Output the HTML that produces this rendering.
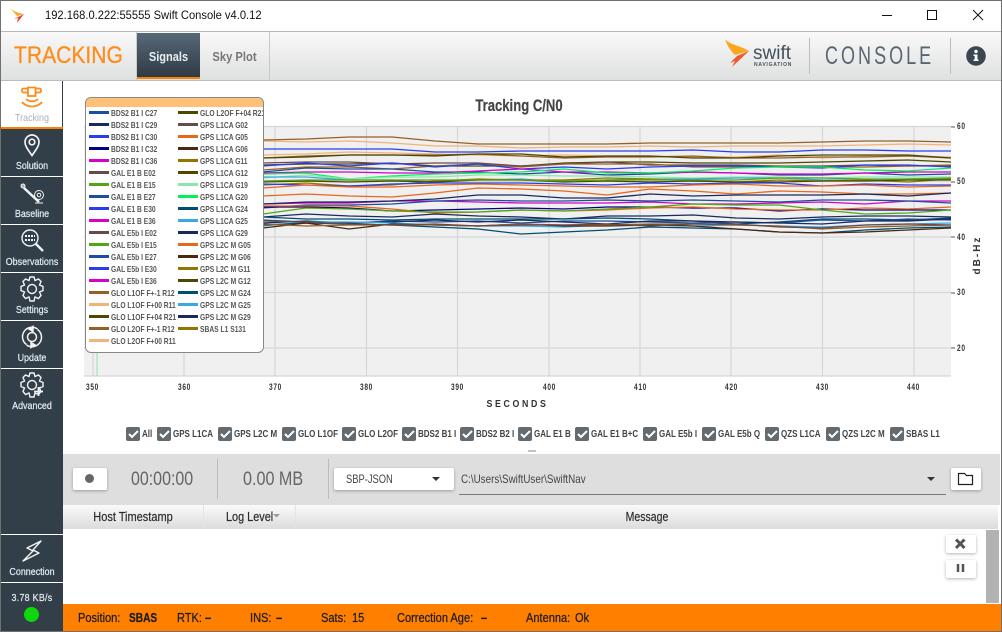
<!DOCTYPE html>
<html><head><meta charset="utf-8"><style>
html,body{margin:0;padding:0;background:#fff}
#r{position:relative;width:1002px;height:632px;overflow:hidden;background:#fff;font-family:"Liberation Sans",sans-serif}
#r div{position:absolute;white-space:nowrap}
.side{left:1px;width:62px;background:#323e48}
.sl{left:1px;width:62px;text-align:center;font-size:10.5px;color:#e6eef5;line-height:12px;transform:scaleX(.85);-webkit-text-stroke:.2px #e6eef5}
.cl{top:428px;font-size:10px;font-weight:bold;color:#444;line-height:13px;transform:scaleX(.8);transform-origin:0 50%}
.lg{font-size:8.5px;font-weight:bold;color:#555;line-height:10px;transform:scaleX(.79);transform-origin:0 50%}
.ls{width:20px;height:3px}
.st{top:610px;font-size:13px;color:#1c1c1c;line-height:15px;transform:scaleX(.85);transform-origin:0 50%;-webkit-text-stroke:.25px #1c1c1c}
.ax{font-size:9.5px;font-weight:bold;color:#333;letter-spacing:1px;line-height:11px;transform:scaleX(.69);transform-origin:0 50%}
.btn{background:#fff;border-radius:2px;box-shadow:0 1px 3px rgba(0,0,0,.3)}
.th{font-size:12.500px;color:#2c2c2c;line-height:14px;top:510px;-webkit-text-stroke:.2px #2c2c2c}
</style></head><body><div id="r">

<!-- title bar -->
<svg style="position:absolute;left:8px;top:6px" width="20" height="18" viewBox="0 0 20 18"><path d="M2 2C6 6 11 7 16 8L9 10Z" fill="#f9a825"/><path d="M16 8L9 17 10 12 6 13Z" fill="#e8472a"/></svg>
<div style="left:45px;top:8px;font-size:12px;color:#111;line-height:15px;transform:scaleX(.93);transform-origin:0 50%">192.168.0.222:55555 Swift Console v4.0.12</div>
<svg style="position:absolute;left:875px;top:5px" width="115" height="22"><path d="M7 10.500H17" stroke="#111"/><rect x="52.500" y="5.500" width="9" height="9" fill="none" stroke="#111"/><path d="M98 5L108 15M108 5L98 15" stroke="#111"/></svg>
<div style="left:1px;top:31px;width:1000px;height:1px;background:#b8b8b8"></div>

<!-- header -->
<div style="left:1px;top:32px;width:1000px;height:48px;background:linear-gradient(#f9f9f9,#dfe0e0)"></div>
<div style="left:1px;top:80px;width:1000px;height:1px;background:#bcbcbc"></div>
<div style="left:14px;top:41px;font-size:24.500px;color:#ff8c1a;line-height:30px;transform:scaleX(.86);transform-origin:0 50%;-webkit-text-stroke:.3px #ff8c1a">TRACKING</div>
<div style="left:136px;top:32px;width:1px;height:48px;background:#ccc"></div>
<div style="left:137px;top:33px;width:63px;height:44px;background:linear-gradient(#566877,#2f3b45)"></div>
<div style="left:137px;top:77px;width:63px;height:2px;background:#ff8000"></div>
<div style="left:137px;top:49px;width:63px;text-align:center;font-size:13px;font-weight:bold;color:#e8eef2;line-height:15px;transform:scaleX(.85)">Signals</div>
<div style="left:200px;top:49px;width:69px;text-align:center;font-size:13px;font-weight:bold;color:#777;line-height:15px;transform:scaleX(.86)">Sky Plot</div>
<div style="left:269px;top:32px;width:1px;height:48px;background:#c8c8c8"></div>
<svg style="position:absolute;left:722px;top:36px" width="36" height="34" viewBox="0 0 36 34"><path d="M3 3C8 9 17 9 27 15L13 19C9 15 5 10 3 3Z" fill="#fca61f"/><path d="M27 15L10 31 13 25 8 27 15 20Z" fill="#f05a28"/></svg>
<div style="left:753px;top:43px;font-size:19px;color:#46505a;line-height:22px">swift</div>
<div style="left:754px;top:62px;font-size:5px;font-weight:bold;color:#46505a;line-height:6px;letter-spacing:.75px">NAVIGATION</div>
<div style="left:809px;top:38px;width:1px;height:36px;background:#bdbdbd"></div>
<div style="left:825px;top:41px;font-size:25px;color:#566673;line-height:30px;letter-spacing:4.2px;transform:scaleX(.72);transform-origin:0 50%">CONSOLE</div>
<div style="left:950px;top:38px;width:1px;height:36px;background:#bdbdbd"></div>
<svg style="position:absolute;left:966px;top:46px" width="20" height="20"><circle cx="10" cy="10" r="9.800" fill="#3b4650"/><circle cx="10" cy="5.500" r="1.700" fill="#fff"/><path d="M7.500 8.500H11.500V13.500H12.500V15H7.500V13.500H8.700V10H7.500Z" fill="#fff"/></svg>

<!-- sidebar -->
<div class="side" style="top:129px;height:47px"></div>
<div class="side" style="top:177px;height:47px"></div>
<div class="side" style="top:225px;height:47px"></div>
<div class="side" style="top:273px;height:47px"></div>
<div class="side" style="top:321px;height:47px"></div>
<div class="side" style="top:369px;height:165px"></div>
<div class="side" style="top:535px;height:47px"></div>
<div class="side" style="top:583px;height:49px"></div>
<div style="left:1px;top:127px;width:62px;height:2px;background:#ff8000"></div>
<div style="left:62px;top:81px;width:1px;height:46px;background:#323e48"></div>

<svg style="position:absolute;left:0;top:81px" width="64" height="340" fill="none">
<g stroke="#ff8c1a" stroke-width="1.800"><rect x="22" y="7.500" width="19" height="4" rx="1.500"/><rect x="28" y="6.500" width="7.500" height="8.500" fill="#fff"/><path d="M26 18C29 21 35 21 38 18M22 21C27 27 37 27 42 21"/></g>
<g stroke="#f0f4f6" stroke-width="1.700"><path d="M32 74.500C27.500 68 25 65 25 61A7 7 0 0 1 39 61C39 65 36.500 68 32 74.500Z"/><circle cx="32" cy="61" r="2.800"/></g>
<g stroke="#f0f4f6"><circle cx="23" cy="105" r="2" fill="#aaa"/><path d="M24 107L39 121" stroke-width="2.500"/><circle cx="39" cy="114" r="4.500"/><circle cx="39" cy="114" r="1.800"/><path d="M35 122H43"/></g>
<g stroke="#f0f4f6" stroke-width="1.400"><circle cx="30" cy="157" r="8"/><path d="M36 163L43 170" stroke-width="2.400"/><path d="M25 155H35M25 159H35" stroke-width="2" stroke-dasharray="2 1"/></g>
<g stroke="#f0f4f6" stroke-width="1.400" transform="translate(0,2.500)"><circle cx="32" cy="205.500" r="4.500"/><path d="M29 197L30 193.500H34L35 197 38.500 195.500 41 198 39.500 201.500 43 203V207L39.500 208.500 41 212 38.500 215 35 213.500 34 217.500H30L29 213.500 25.500 215 23 212 24.500 208.500 21 207V203L24.500 201.500 23 198 25.500 195.500Z"/></g>
<g stroke="#f0f4f6" stroke-width="1.500"><circle cx="32" cy="256" r="4.500"/><path d="M37.500 248A9.500 9.500 0 0 0 26.500 263.500M26.500 264A9.500 9.500 0 0 0 37.500 248.500"/><path d="M33 245.500L29 248 33 250.500ZM31 261.500L35 264 31 266.500Z" fill="#f0f4f6"/></g>
<g stroke="#f0f4f6" stroke-width="1.400" transform="translate(0,98.500)"><circle cx="32" cy="205.500" r="4.500"/><path d="M29 197L30 193.500H34L35 197 38.500 195.500 41 198 39.500 201.500 43 203V207L39.500 208.500 41 212 38.500 215 35 213.500 34 217.500H30L29 213.500 25.500 215 23 212 24.500 208.500 21 207V203L24.500 201.500 23 198 25.500 195.500Z"/><path d="M34 212H43M38.500 207.500V216.500" stroke-width="1.800"/></g>
</svg>
<svg style="position:absolute;left:20px;top:538px" width="24" height="26" fill="none"><path d="M21 3L7 10 13 13 3 23 19 15 13 12Z" stroke="#f0f4f6" stroke-width="1.400" stroke-linejoin="round"/></svg>

<div class="sl" style="top:112px;color:#a8afb8;-webkit-text-stroke:0">Tracking</div>
<div class="sl" style="top:160px">Solution</div>
<div class="sl" style="top:208px">Baseline</div>
<div class="sl" style="top:256px">Observations</div>
<div class="sl" style="top:304px">Settings</div>
<div class="sl" style="top:352px">Update</div>
<div class="sl" style="top:400px">Advanced</div>
<div class="sl" style="top:566px">Connection</div>
<div class="sl" style="top:593px;font-size:10px;letter-spacing:.3px;transform:scaleX(.89)">3.78 KB/s</div>
<div style="left:24px;top:607px;width:15px;height:15px;border-radius:50%;background:#0cd80c"></div>

<!-- chart -->
<div style="left:79px;top:96px;width:880px;text-align:center;font-size:17px;font-weight:bold;color:#444;line-height:20px;transform:scaleX(.77);-webkit-text-stroke:.2px #444">Tracking C/N0</div>
<svg style="position:absolute;left:0;top:0" width="1002" height="420" fill="none">
<rect x="84" y="126" width="867" height="250" fill="#f0f0f0"/>
<path d="M84 126.500H951M84 181.500H951M84 237H951M84 292.500H951M84 348H951M84 376H951M93 126V376M184 126V376M275 126V376M366.500 126V376M457.500 126V376M549 126V376M640 126V376M731 126V376M822.500 126V376M914 126V376" stroke="#d6d6d6" stroke-width="1.200"/>
<path d="M97 340V376" stroke="#8be6a8"/>
<path d="M951 127h4M951 182h4M951 237h4M951 293h4M951 348h4" stroke="#555"/>
<g stroke-width="1.300">
<path stroke="#f0b478" d="M263 141l43 1 43-1 43 2 43 3 43 0 43 2 43-1 43 0 43-1 43 1 43-1 43 0 43 0 43-1 43-1 43 1"/>
<path stroke="#946028" d="M263 140l43-1 43-2 43 0 43 4 43 3 43 0 43 0 43 0 43-1 43 0 43 0 43 0 43-1 43-1 43 0 43 1"/>
<path stroke="#2a3cf0" d="M263 149l43 0 43 0 43 0 43 3 43 0 43-1 43 0 43 0 43 0 43-1 43 2 43 0 43-2 43 0 43 1 43 0"/>
<path stroke="#f0b478" d="M263 155l43-1 43-2 43 1 43 1 43 1 43 1 43-1 43 1 43 0 43 1 43 0 43-2 43 3 43-2 43 0 43 1"/>
<path stroke="#946028" d="M263 158l43-2 43-1 43 0 43 0 43-1 43 2 43 2 43-1 43 0 43-1 43 2 43 0 43-1 43 0 43-1 43 2"/>
<path stroke="#4d4800" d="M263 158l43-1 43-2 43 0 43 1 43-2 43 0 43 3 43-1 43 0 43 2 43 0 43-2 43-1 43 0 43 0 43 3"/>
<path stroke="#4d4800" d="M263 165l43-1 43 0 43-1 43 3 43 0 43 0 43-3 43-1 43 0 43 1 43 0 43 0 43-1 43-1 43-1 43 2"/>
<path stroke="#6a4a4a" d="M263 163l43-1 43 0 43 2 43-1 43 0 43 3 43-2 43-2 43 3 43 0 43 0 43 1 43 0 43-1 43 1 43 0"/>
<path stroke="#946028" d="M263 170l43-3 43 0 43 2 43-3 43-2 43 3 43-3 43 0 43 0 43 3 43 0 43-1 43 1 43 0 43-1 43-1"/>
<path stroke="#2a3cf0" d="M263 166l43-3 43 3 43-3 43 4 43-3 43 5 43-2 43 2 43-2 43-1 43 0 43 1 43 1 43-3 43 0 43 2"/>
<path stroke="#1a4fa0" d="M263 172l43-4 43 1 43 0 43 3 43 0 43 2 43-2 43 3 43-1 43-2 43 1 43 2 43 0 43-2 43 2 43-1"/>
<path stroke="#d800c8" d="M263 173l43-1 43 0 43 1 43 0 43-2 43-2 43 3 43 0 43 1 43-1 43 1 43 1 43 0 43-1 43-1 43 0"/>
<path stroke="#00f25a" d="M263 174l43-1 43 6 43-3 43-2 43-1 43-1 43-3 43 4 43 0 43-2 43-3 43-1 43 0 43 3 43 1 43-3"/>
<path stroke="#8be6a8" d="M263 178l43-3 43 4 43-2 43 0 43-2 43 0 43 1 43 0 43 1 43 1 43-1 43 0 43 1 43-1 43 0 43 0"/>
<path stroke="#38a8e8" d="M263 177l43 0 43 3 43 0 43 2 43-2 43-1 43 3 43-2 43-1 43 0 43-1 43 0 43 2 43 0 43-1 43 0"/>
<path stroke="#937600" d="M263 185l43-2 43 3 43-1 43-4 43-2 43 1 43 0 43-2 43 1 43 2 43 1 43-2 43 1 43-1 43 2 43-3"/>
<path stroke="#4d4800" d="M263 182l43-1 43 1 43-1 43 1 43-2 43 0 43 2 43-1 43 1 43-1 43 1 43 0 43-1 43 0 43-1 43 0"/>
<path stroke="#4ea815" d="M263 181l43-1 43 0 43 0 43 0 43 0 43 0 43 1 43-1 43 0 43 0 43 0 43-2 43 0 43 1 43 0 43-1"/>
<path stroke="#2a3cf0" d="M263 184l43 1 43 1 43-2 43-1 43 0 43 0 43 1 43 1 43-2 43 1 43-1 43 0 43 3 43-2 43 1 43 0"/>
<path stroke="#e8671c" d="M263 188l43-3 43 2 43 0 43-2 43-1 43 1 43 1 43 1 43 0 43-2 43-1 43 2 43 0 43-1 43 2 43-1"/>
<path stroke="#e8671c" d="M263 196l43-2 43 2 43 1 43-4 43-5 43 1 43 2 43 4 43-6 43 2 43 3 43-3 43 1 43 2 43 0 43-1"/>
<path stroke="#d800c8" d="M263 204l43-1 43 0 43-2 43 0 43 1 43 1 43 0 43 0 43-1 43 2 43 0 43-1 43-1 43 2 43-3 43 0"/>
<path stroke="#1a2a5e" d="M263 204l43-2 43 0 43-1 43-2 43-4 43 0 43 3 43 0 43-4 43 2 43-1 43 0 43 0 43-1 43 2 43-3"/>
<path stroke="#1a4fa0" d="M263 208l43-3 43 0 43-1 43-3 43-1 43 1 43 0 43-1 43 1 43-1 43 1 43 1 43-2 43 0 43 1 43 2"/>
<path stroke="#000080" d="M263 207l43 0 43 1 43 3 43-1 43-1 43-1 43 1 43-2 43 0 43 1 43 0 43 3 43-2 43 1 43 0 43 0"/>
<path stroke="#e8671c" d="M263 206l43 0 43 0 43 3 43 4 43-1 43-2 43 1 43-1 43-2 43-1 43 2 43 1 43 0 43-2 43 1 43-2"/>
<path stroke="#4ea815" d="M263 214l43-6 43 1 43 2 43 1 43 0 43-2 43 1 43-2 43-2 43-3 43 1 43 0 43 5 43 4 43-1 43-3"/>
<path stroke="#1a2a5e" d="M263 217l43-3 43 2 43 1 43-3 43 2 43 1 43 2 43-3 43 0 43-1 43 3 43 1 43-2 43-1 43 0 43 1"/>
<path stroke="#004f70" d="M263 217l43 2 43 0 43 1 43-1 43 0 43 0 43 0 43-1 43 1 43 2 43 3 43-2 43-3 43 0 43 1 43-2"/>
<path stroke="#1a4fa0" d="M263 220l43 2 43 1 43-2 43 1 43-1 43 2 43-2 43 0 43 1 43 1 43-1 43 1 43-3 43 1 43-2 43 1"/>
<path stroke="#1a2a5e" d="M263 223l43-2 43 2 43-1 43-2 43 2 43-2 43 2 43 2 43-3 43 0 43 1 43 1 43 1 43-3 43 0 43-2"/>
<path stroke="#38a8e8" d="M263 226l43-4 43 0 43 1 43 2 43 1 43 0 43 1 43-2 43 0 43 1 43-1 43 1 43 1 43-2 43-1 43-1"/>
<path stroke="#004f70" d="M263 225l43-2 43 1 43 1 43 2 43 2 43 5 43-2 43-2 43-3 43 1 43 1 43 3 43 1 43-3 43-2 43-1"/>
<path stroke="#4b2810" d="M263 228l43-5 43 6 43-5 43 1 43 1 43-2 43 2 43 0 43-1 43 1 43 3 43 3 43 1 43-1 43-2 43-2"/>
<path stroke="#946028" d="M263 224l43 2 43-1 43 0 43 0 43 1 43-2 43 1 43 0 43-1 43 0 43 1 43 1 43 3 43-2 43-1 43-1"/>
<path stroke="#6a4a4a" d="M263 221l43 1 43 2 43 1 43-1 43 2 43-1 43 0 43-1 43 2 43-2 43 0 43 3 43 1 43-3 43-1 43 1"/>
</g>
</svg>
<div class="ax" style="left:957px;top:121px">60</div>
<div class="ax" style="left:957px;top:176px">50</div>
<div class="ax" style="left:957px;top:232px">40</div>
<div class="ax" style="left:957px;top:287px">30</div>
<div class="ax" style="left:957px;top:343px">20</div>
<div class="ax" style="left:86px;top:382px">350</div>
<div class="ax" style="left:178px;top:382px">360</div>
<div class="ax" style="left:269px;top:382px">370</div>
<div class="ax" style="left:360px;top:382px">380</div>
<div class="ax" style="left:451px;top:382px">390</div>
<div class="ax" style="left:543px;top:382px">400</div>
<div class="ax" style="left:634px;top:382px">410</div>
<div class="ax" style="left:725px;top:382px">420</div>
<div class="ax" style="left:816px;top:382px">430</div>
<div class="ax" style="left:907px;top:382px">440</div>
<div style="left:420px;top:399px;width:195px;text-align:center;font-size:10px;font-weight:bold;color:#333;letter-spacing:3px;line-height:12px;transform:scaleX(.88)">SECONDS</div>
<div style="left:948px;top:249px;width:60px;text-align:center;font-size:10px;font-weight:bold;color:#333;letter-spacing:2px;line-height:12px;transform:rotate(-90deg)">dB-Hz</div>

<!-- legend -->
<div style="left:85px;top:97px;width:177px;height:254px;background:#fff;border:1px solid #888;border-radius:6px;overflow:hidden">
<div style="left:0;top:0;width:177px;height:9px;background:#ffc078"></div>
</div>
<div class="ls" style="left:89px;top:111px;background:#1a4fa0"></div><div class="lg" style="left:111px;top:108px">BDS2 B1 I C27</div>
<div class="ls" style="left:89px;top:123px;background:#1a2a5e"></div><div class="lg" style="left:111px;top:120px">BDS2 B1 I C29</div>
<div class="ls" style="left:89px;top:135px;background:#2a3cf0"></div><div class="lg" style="left:111px;top:132px">BDS2 B1 I C30</div>
<div class="ls" style="left:89px;top:147px;background:#000080"></div><div class="lg" style="left:111px;top:144px">BDS2 B1 I C32</div>
<div class="ls" style="left:89px;top:159px;background:#d800c8"></div><div class="lg" style="left:111px;top:156px">BDS2 B1 I C36</div>
<div class="ls" style="left:89px;top:171px;background:#674a4a"></div><div class="lg" style="left:111px;top:168px">GAL E1 B E02</div>
<div class="ls" style="left:89px;top:183px;background:#4ea815"></div><div class="lg" style="left:111px;top:180px">GAL E1 B E15</div>
<div class="ls" style="left:89px;top:195px;background:#1a4fa0"></div><div class="lg" style="left:111px;top:192px">GAL E1 B E27</div>
<div class="ls" style="left:89px;top:207px;background:#2a3cf0"></div><div class="lg" style="left:111px;top:204px">GAL E1 B E30</div>
<div class="ls" style="left:89px;top:219px;background:#d800c8"></div><div class="lg" style="left:111px;top:216px">GAL E1 B E36</div>
<div class="ls" style="left:89px;top:231px;background:#674a4a"></div><div class="lg" style="left:111px;top:228px">GAL E5b I E02</div>
<div class="ls" style="left:89px;top:243px;background:#4ea815"></div><div class="lg" style="left:111px;top:240px">GAL E5b I E15</div>
<div class="ls" style="left:89px;top:255px;background:#1a4fa0"></div><div class="lg" style="left:111px;top:252px">GAL E5b I E27</div>
<div class="ls" style="left:89px;top:267px;background:#2a3cf0"></div><div class="lg" style="left:111px;top:264px">GAL E5b I E30</div>
<div class="ls" style="left:89px;top:279px;background:#d800c8"></div><div class="lg" style="left:111px;top:276px">GAL E5b I E36</div>
<div class="ls" style="left:89px;top:291px;background:#946028"></div><div class="lg" style="left:111px;top:288px">GLO L1OF F+-1 R12</div>
<div class="ls" style="left:89px;top:303px;background:#f0b478"></div><div class="lg" style="left:111px;top:300px">GLO L1OF F+00 R11</div>
<div class="ls" style="left:89px;top:315px;background:#4d4800"></div><div class="lg" style="left:111px;top:312px">GLO L1OF F+04 R21</div>
<div class="ls" style="left:89px;top:327px;background:#946028"></div><div class="lg" style="left:111px;top:324px">GLO L2OF F+-1 R12</div>
<div class="ls" style="left:89px;top:339px;background:#f0b478"></div><div class="lg" style="left:111px;top:336px">GLO L2OF F+00 R11</div>
<div class="ls" style="left:178px;top:111px;background:#4d4800"></div><div class="lg" style="left:200px;top:108px;width:80px;overflow:hidden">GLO L2OF F+04 R21</div>
<div class="ls" style="left:178px;top:123px;background:#674a4a"></div><div class="lg" style="left:200px;top:120px">GPS L1CA G02</div>
<div class="ls" style="left:178px;top:135px;background:#e8671c"></div><div class="lg" style="left:200px;top:132px">GPS L1CA G05</div>
<div class="ls" style="left:178px;top:147px;background:#4b2810"></div><div class="lg" style="left:200px;top:144px">GPS L1CA G06</div>
<div class="ls" style="left:178px;top:159px;background:#937600"></div><div class="lg" style="left:200px;top:156px">GPS L1CA G11</div>
<div class="ls" style="left:178px;top:171px;background:#4d4800"></div><div class="lg" style="left:200px;top:168px">GPS L1CA G12</div>
<div class="ls" style="left:178px;top:183px;background:#8be6a8"></div><div class="lg" style="left:200px;top:180px">GPS L1CA G19</div>
<div class="ls" style="left:178px;top:195px;background:#00f25a"></div><div class="lg" style="left:200px;top:192px">GPS L1CA G20</div>
<div class="ls" style="left:178px;top:207px;background:#004f70"></div><div class="lg" style="left:200px;top:204px">GPS L1CA G24</div>
<div class="ls" style="left:178px;top:219px;background:#38a8e8"></div><div class="lg" style="left:200px;top:216px">GPS L1CA G25</div>
<div class="ls" style="left:178px;top:231px;background:#1a2a5e"></div><div class="lg" style="left:200px;top:228px">GPS L1CA G29</div>
<div class="ls" style="left:178px;top:243px;background:#e8671c"></div><div class="lg" style="left:200px;top:240px">GPS L2C M G05</div>
<div class="ls" style="left:178px;top:255px;background:#4b2810"></div><div class="lg" style="left:200px;top:252px">GPS L2C M G06</div>
<div class="ls" style="left:178px;top:267px;background:#937600"></div><div class="lg" style="left:200px;top:264px">GPS L2C M G11</div>
<div class="ls" style="left:178px;top:279px;background:#4d4800"></div><div class="lg" style="left:200px;top:276px">GPS L2C M G12</div>
<div class="ls" style="left:178px;top:291px;background:#004f70"></div><div class="lg" style="left:200px;top:288px">GPS L2C M G24</div>
<div class="ls" style="left:178px;top:303px;background:#38a8e8"></div><div class="lg" style="left:200px;top:300px">GPS L2C M G25</div>
<div class="ls" style="left:178px;top:315px;background:#1a2a5e"></div><div class="lg" style="left:200px;top:312px">GPS L2C M G29</div>
<div class="ls" style="left:178px;top:327px;background:#937600"></div><div class="lg" style="left:200px;top:324px">SBAS L1 S131</div>

<!-- checkboxes -->
<svg style="position:absolute;left:0;top:420px" width="1002" height="30" fill="none">
<g fill="#636b70"><rect x="126" y="7" width="14" height="14" rx="2"/><rect x="157" y="7" width="14" height="14" rx="2"/><rect x="218" y="7" width="14" height="14" rx="2"/><rect x="282" y="7" width="14" height="14" rx="2"/><rect x="342" y="7" width="14" height="14" rx="2"/><rect x="402" y="7" width="14" height="14" rx="2"/><rect x="460" y="7" width="14" height="14" rx="2"/><rect x="518" y="7" width="14" height="14" rx="2"/><rect x="575" y="7" width="14" height="14" rx="2"/><rect x="643" y="7" width="14" height="14" rx="2"/><rect x="702" y="7" width="14" height="14" rx="2"/><rect x="765" y="7" width="14" height="14" rx="2"/><rect x="826" y="7" width="14" height="14" rx="2"/><rect x="890" y="7" width="14" height="14" rx="2"/></g>
<path stroke="#fff" stroke-width="2" d="M129 14l3 3 6-6M160 14l3 3 6-6M221 14l3 3 6-6M285 14l3 3 6-6M345 14l3 3 6-6M405 14l3 3 6-6M463 14l3 3 6-6M521 14l3 3 6-6M578 14l3 3 6-6M646 14l3 3 6-6M705 14l3 3 6-6M768 14l3 3 6-6M829 14l3 3 6-6M893 14l3 3 6-6"/>
</svg>
<div class="cl" style="left:142px">All</div>
<div class="cl" style="left:173px">GPS L1CA</div>
<div class="cl" style="left:234px">GPS L2C M</div>
<div class="cl" style="left:298px">GLO L1OF</div>
<div class="cl" style="left:358px">GLO L2OF</div>
<div class="cl" style="left:418px">BDS2 B1 I</div>
<div class="cl" style="left:476px">BDS2 B2 I</div>
<div class="cl" style="left:534px">GAL E1 B</div>
<div class="cl" style="left:591px">GAL E1 B+C</div>
<div class="cl" style="left:659px">GAL E5b I</div>
<div class="cl" style="left:718px">GAL E5b Q</div>
<div class="cl" style="left:781px">QZS L1CA</div>
<div class="cl" style="left:842px">QZS L2C M</div>
<div class="cl" style="left:906px">SBAS L1</div>
<div style="left:528px;top:450px;width:8px;height:2px;background:#c4c4c4"></div>

<!-- logging bar -->
<div style="left:63px;top:454px;width:937px;height:51px;background:#dedede"></div>
<div class="btn" style="left:73px;top:468px;width:34px;height:22px"></div>
<div style="left:85px;top:474px;width:9px;height:9px;border-radius:50%;background:#666"></div>
<div style="left:131px;top:468px;font-size:19px;color:#666;line-height:24px;transform:scaleX(.84);transform-origin:0 50%">00:00:00</div>
<div style="left:217px;top:459px;width:1px;height:40px;background:#bbb"></div>
<div style="left:243px;top:468px;font-size:19px;color:#666;line-height:24px;transform:scaleX(.85);transform-origin:0 50%">0.00 MB</div>
<div style="left:328px;top:459px;width:1px;height:40px;background:#bbb"></div>
<div class="btn" style="left:334px;top:468px;width:120px;height:22px"></div>
<div style="left:346px;top:472px;font-size:12px;color:#444;line-height:14px;transform:scaleX(.78);transform-origin:0 50%">SBP-JSON</div>
<svg style="position:absolute;left:430px;top:475px" width="12" height="8"><path d="M2 2H10L6 6Z" fill="#333"/></svg>
<div style="left:461px;top:472px;font-size:12px;color:#444;line-height:14px;transform:scaleX(.82);transform-origin:0 50%">C:\Users\SwiftUser\SwiftNav</div>
<div style="left:459px;top:494px;width:487px;height:1px;background:#777"></div>
<svg style="position:absolute;left:925px;top:475px" width="12" height="8"><path d="M2 2H10L6 6Z" fill="#333"/></svg>
<div class="btn" style="left:951px;top:468px;width:30px;height:22px"></div>
<svg style="position:absolute;left:957px;top:471px" width="18" height="16" fill="none"><path d="M1.500 2.500H7.500L9.500 4.500H15.500V13.500H1.500Z" stroke="#222" stroke-width="1.200"/></svg>

<!-- table -->
<div style="left:63px;top:505px;width:935px;height:24px;background:linear-gradient(#fafafa,#dcdcdc)"></div>
<div style="left:203px;top:505px;width:1px;height:24px;background:#e4e4e4"></div>
<div style="left:295px;top:505px;width:1px;height:24px;background:#e4e4e4"></div>
<div class="th" style="left:63px;width:140px;text-align:center;transform:scaleX(.88)">Host Timestamp</div>
<div class="th" style="left:226px;transform:scaleX(.87);transform-origin:0 50%">Log Level</div>
<svg style="position:absolute;left:272px;top:513px" width="9" height="6"><path d="M1 1H8L4.500 4.500Z" fill="#999"/></svg>
<div class="th" style="left:296px;width:702px;text-align:center;transform:scaleX(.84)">Message</div>
<div style="left:986px;top:530px;width:13px;height:73px;background:#b2b2b2"></div>
<div class="btn" style="left:946px;top:535px;width:30px;height:18px"></div>
<div class="btn" style="left:946px;top:560px;width:30px;height:18px"></div>
<svg style="position:absolute;left:954px;top:538px" width="14" height="36" fill="none"><path d="M2 1.500L10.500 10M10.500 1.500L2 10" stroke="#555" stroke-width="3"/><path d="M4 26V34M9 26V34" stroke="#555" stroke-width="2.500"/></svg>

<!-- status -->
<div style="left:63px;top:604px;width:938px;height:27px;background:#ff8000"></div>
<div class="st" style="left:78px">Position:</div><div class="st" style="left:129px;font-weight:bold;transform:scaleX(.78)">SBAS</div>
<div class="st" style="left:177px">RTK:</div><div class="st" style="left:205px;font-weight:bold">–</div>
<div class="st" style="left:250px">INS:</div><div class="st" style="left:276px;font-weight:bold">–</div>
<div class="st" style="left:321px">Sats:</div><div class="st" style="left:352px">15</div>
<div class="st" style="left:397px">Correction Age:</div><div class="st" style="left:481px;font-weight:bold">–</div>
<div class="st" style="left:526px">Antenna:</div><div class="st" style="left:575px">Ok</div>

<!-- window border -->
<div style="left:0;top:0;width:1000px;height:630px;border:1px solid #707070"></div>
</div></body></html>
